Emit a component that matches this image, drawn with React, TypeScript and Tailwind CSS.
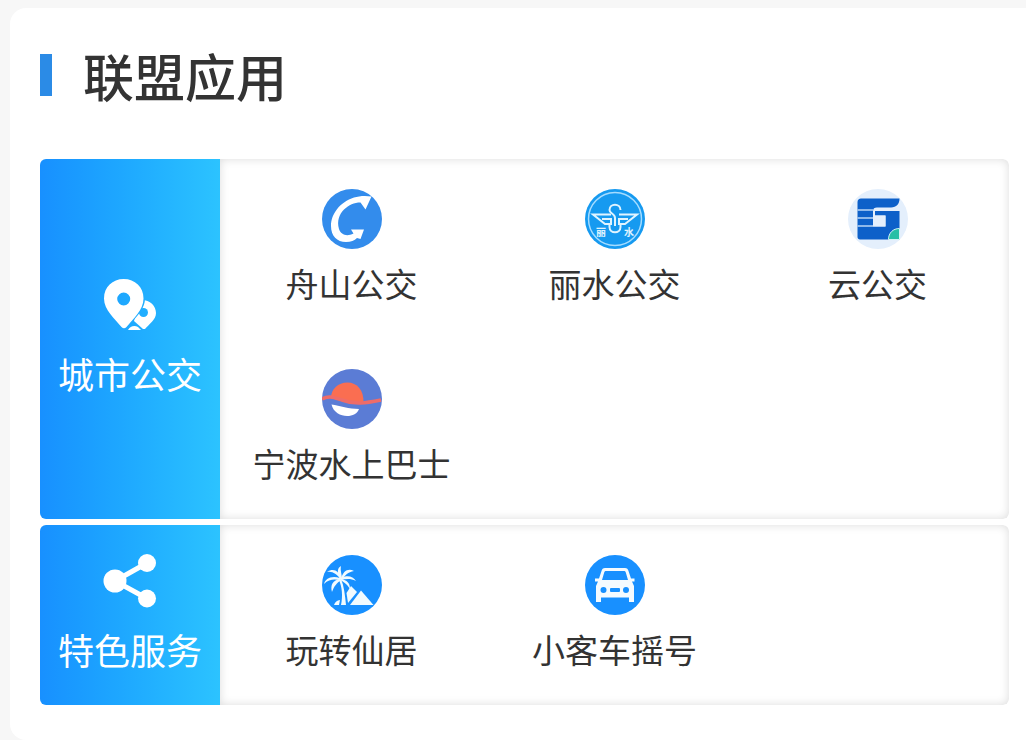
import type { ReactNode } from "react"

type AppItem = {
    name: string
    icon: ReactNode
}

const ZhoushanIcon = () => (
    <svg viewBox="0 0 60 60" className="size-[60px]" aria-hidden="true">
        <circle cx="30" cy="30" r="30" fill="#338cec" />
        <path d="M49.5 7.5 C43 6.5 37 7 32 8.5 C18 13 9 25 9 37 C9 47 15 53 24 53 C29 53 32.500 51.500 35 49 L38.500 50 L42 40.500 L29 40.500 L31.500 44.500 C25 48 19 46 17 40 C14.500 32 17.500 25 22 20.500 C27 16 32 13.500 38.500 13.500 L43.500 20.500 Z" fill="#fff" />
    </svg>
)

const LishuiIcon = () => (
    <svg viewBox="0 0 60 60" className="size-[60px]" aria-hidden="true">
        <circle cx="30" cy="30" r="30" fill="#169af0" />
        <circle cx="30" cy="30" r="26.500" fill="none" stroke="#a5dcff" strokeWidth="1.500" />
        <g fill="none" stroke="#e0f4ff" strokeWidth="2">
            <path d="M26 25.500 H8 L20 35 H26 V30 H17" />
            <path d="M34 25.500 H52 L40 35 H34 V30 H43" />
            <path d="M35.500 21 C35.500 14 24.500 14 24.500 21 C24.500 25 30 24 30 29 V37" />
            <path d="M24.500 35 V38 C24.500 45 35.500 45 35.500 38 V35" />
        </g>
        <g fill="#e0f4ff" fontSize="10" fontWeight="bold" fontFamily="Noto Sans CJK SC, sans-serif" textAnchor="middle">
            <text x="16" y="47">丽</text>
            <text x="44" y="47">水</text>
        </g>
    </svg>
)

const CloudBusIcon = () => (
    <svg viewBox="0 0 60 60" className="size-[60px]" aria-hidden="true">
        <circle cx="30" cy="30" r="30" fill="#e4effc" />
        <path d="M13 9.500 H51.500 C51.500 15 48.500 18.500 43 18.500 H29 C26.500 18.500 25 19.500 25 22 V37.500 H37.500 V26.500 H27 V22 H51.500 V50.500 H12 C10.500 50.500 9.500 49.500 9.500 48 V13 C9.500 11 11 9.500 13 9.500 Z" fill="#0d60c9" />
        <path d="M25 26.500 H37.500 V37.500 H25 Z" fill="#e4effc" />
        <path d="M9.500 21 H25 M9.500 29 H25 M9.500 37 H25" stroke="#b9d5f5" strokeWidth="1.500" />
        <path d="M51.500 39.500 V50.500 H40.500 C40.500 44 45 39.500 51.500 39.500 Z" fill="#27bfa5" stroke="#d5f3f5" strokeWidth="1" />
    </svg>
)

const NingboIcon = () => (
    <svg viewBox="0 0 60 60" className="size-[60px]" aria-hidden="true">
        <circle cx="30" cy="30" r="30" fill="#5b7cd5" />
        <path d="M9 29 C9 20 16 13.500 25.500 13.500 C35 13.500 42 21 41.500 34 C31 35 20 32 9 29 Z" fill="#fa6e51" />
        <path d="M0 30 C7 26 13 29 20 31 C33 36 44 34 59 31" fill="none" stroke="#ef6c68" strokeWidth="3.500" />
        <path d="M9.500 35.500 C18 37 27 40 37 40 C34 50 13 50 9.500 35.500 Z" fill="#fff" />
    </svg>
)

const PalmIcon = () => (
    <svg viewBox="0 0 60 60" className="size-[60px]" aria-hidden="true">
        <circle cx="30" cy="30" r="30" fill="#1890ff" />
        <g fill="#f1fbff">
            <path d="M19 24 C22 31 23 40 24 50 H19 C21 41 20 32 17 25 Z" />
            <path d="M19 24 C17 15 11 13 5 17 C11 16 14 19 19 24 Z" />
            <path d="M18 23 C9 20 3 24 2 29 C7 24 12 24 18 25 Z" />
            <path d="M18 24 C11 25 8 30 10 37 C12 31 15 28 19 25 Z" />
            <path d="M18 24 C15 18 15 13 19 11 C18 16 20 19 20 24 Z" />
            <path d="M19 24 C21 16 26 13 32 16 C26 17 23 20 20 25 Z" />
            <path d="M19 23 C25 20 31 21 34 26 C28 23 24 24 19 25 Z" />
            <path d="M19 24 C25 25 28 28 28 34 C25 29 22 27 18 25 Z" />
            <path d="M12 50 C13 47 15 45.500 18 45 L17 50 Z" />
            <path d="M29 31 L35 37 L26 48 L24.500 38 Z" />
            <path d="M39 35.500 L51.500 50 H28 Z" />
        </g>
    </svg>
)

const CarIcon = () => (
    <svg viewBox="0 0 60 60" className="size-[60px]" aria-hidden="true">
        <circle cx="30" cy="30" r="30" fill="#1890ff" />
        <path fillRule="evenodd" d="M20 13 H40 C42 13 43 14 43.500 16 L46 23.500 H49.500 V26.500 H47 L49 31 V47 H44 V42.500 H16 V47 H11 V31 L13 26.500 H10 V23.500 H14 L16.500 16 C17 14 18 13 20 13 Z M21 16 C20 16 19.500 16.500 19.200 17.500 L17 25 H43 L40.800 17.500 C40.500 16.500 40 16 39 16 Z" fill="#f5fbff" />
        <g fill="#1890ff">
            <circle cx="18.500" cy="35" r="3" />
            <circle cx="41" cy="35" r="3" />
            <rect x="25" y="33" width="10" height="4" rx="1" />
        </g>
    </svg>
)

const PinsIcon = () => (
    <svg viewBox="0 0 60 60" className="size-[60px]" aria-hidden="true">
        <mask id="pin-gap">
            <rect width="60" height="60" fill="#fff" />
            <path d="M24 53.500 C16 44 4 35 4 23.500 C4 -2.500 43.500 -2.500 43.500 23.500 C43.500 35 32 44 24 53.500 Z" fill="#000" stroke="#000" strokeWidth="3" />
            <circle cx="43.500" cy="37.500" r="4.500" fill="#000" />
        </mask>
        <g fill="#fff">
            <path fillRule="evenodd" d="M21.500 52 C15 44 4 35 4 23.500 C4 12 12.500 4 23.700 4 C35 4 43.500 12 43.500 23.500 C43.500 35 33 44 26.500 52 Q24 54.500 21.500 52 Z M23.700 17.500 A6.500 6.500 0 1 0 23.700 30.500 A6.500 6.500 0 1 0 23.700 17.500 Z" />
            <path mask="url(#pin-gap)" d="M43 54 L34 46 L40 25 C49 24 56 30 56 38 C56 45 49 49 45 54 Z" />
            <path d="M28 55 C30 51.500 34 50 38 52 L41 55 Z" />
        </g>
    </svg>
)

const ShareIcon = () => (
    <svg viewBox="0 0 60 60" className="size-[60px]" aria-hidden="true">
        <path d="M47 12 L15 30 L47 47.500" fill="none" stroke="#fff" strokeWidth="5" />
        <circle cx="15" cy="30" r="11.500" fill="#fff" />
        <circle cx="47" cy="12" r="9" fill="#fff" />
        <circle cx="47" cy="47.500" r="9" fill="#fff" />
    </svg>
)

const cityBus: AppItem[] = [
    { name: "舟山公交", icon: <ZhoushanIcon /> },
    { name: "丽水公交", icon: <LishuiIcon /> },
    { name: "云公交", icon: <CloudBusIcon /> },
    { name: "宁波水上巴士", icon: <NingboIcon /> },
]

const services: AppItem[] = [
    { name: "玩转仙居", icon: <PalmIcon /> },
    { name: "小客车摇号", icon: <CarIcon /> },
]

const Category = ({ title, icon, items }: { title: string; icon: ReactNode; items: AppItem[] }) => {
    return (
        <section className="flex overflow-hidden rounded-md">
            <div className="flex w-[180px] shrink-0 flex-col items-center justify-center gap-3 bg-linear-to-r from-[#1890ff] to-[#2cc3ff] pb-1 text-white">
                {icon}
                <h2 className="text-[36px] leading-[52px]">{title}</h2>
            </div>
            <ul className="grid flex-1 grid-cols-3 rounded-r-md shadow-[inset_0_0_10px_rgba(0,0,0,0.14)]">
                {items.map((item) => (
                    <li key={item.name}>
                        <a href="#" className="flex flex-col items-center gap-[10px] pt-[30px] pb-8">
                            {item.icon}
                            <span className="text-[33px] leading-[48px] whitespace-nowrap">{item.name}</span>
                        </a>
                    </li>
                ))}
            </ul>
        </section>
    )
}

const App = () => {
    return (
        <div className="min-h-screen bg-[#f7f7f7] pt-2 pl-[10px] font-['Noto_Sans_CJK_SC',sans-serif] text-[#333]">
            <main className="rounded-l-2xl bg-white pt-8 pr-[17px] pb-[35px] pl-[30px]">
                <header className="flex items-center gap-[31px]">
                    <span className="h-[42px] w-3 bg-[#2b8be6]" />
                    <h1 className="text-[51px] leading-[70px] font-medium">联盟应用</h1>
                </header>
                <div className="mt-[49px] flex flex-col gap-[6px]">
                    <Category title="城市公交" icon={<PinsIcon />} items={cityBus} />
                    <Category title="特色服务" icon={<ShareIcon />} items={services} />
                </div>
            </main>
        </div>
    )
}

export default App
